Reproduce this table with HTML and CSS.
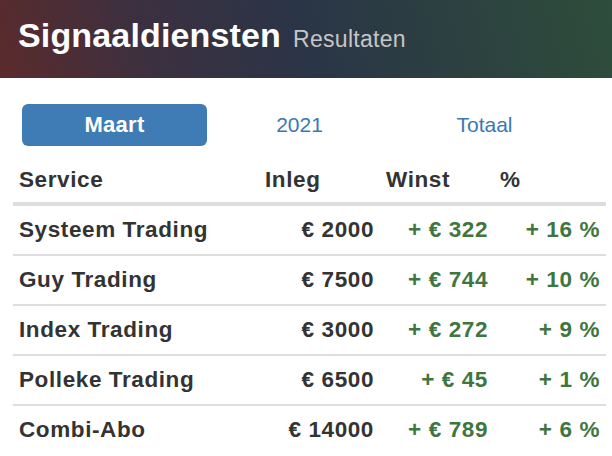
FILE: index.html
```html
<!DOCTYPE html>
<html lang="nl">
<head>
<meta charset="utf-8">
<title>Signaaldiensten Resultaten</title>
<link rel="stylesheet" href="styles.css">
</head>
<body>
<header class="topbar">
  <h1 class="title">Signaaldiensten</h1>
  <span class="subtitle">Resultaten</span>
</header>
<nav class="tabs">
  <a class="tab active">Maart</a>
  <a class="tab">2021</a>
  <a class="tab">Totaal</a>
</nav>
<table class="results">
  <colgroup>
    <col class="c-service">
    <col class="c-inleg">
    <col class="c-winst">
    <col class="c-pct">
  </colgroup>
  <thead>
    <tr><th>Service</th><th>Inleg</th><th>Winst</th><th>%</th></tr>
  </thead>
  <tbody>
    <tr><td>Systeem Trading</td><td class="num">€ 2000</td><td class="num pos">+ € 322</td><td class="num pos">+ 16 %</td></tr>
    <tr><td>Guy Trading</td><td class="num">€ 7500</td><td class="num pos">+ € 744</td><td class="num pos">+ 10 %</td></tr>
    <tr><td>Index Trading</td><td class="num">€ 3000</td><td class="num pos">+ € 272</td><td class="num pos">+ 9 %</td></tr>
    <tr><td>Polleke Trading</td><td class="num">€ 6500</td><td class="num pos">+ € 45</td><td class="num pos">+ 1 %</td></tr>
    <tr><td>Combi-Abo</td><td class="num">€ 14000</td><td class="num pos">+ € 789</td><td class="num pos">+ 6 %</td></tr>
  </tbody>
</table>
</body>
</html>
```
FILE: styles.css
```css
* { box-sizing: border-box; }
html, body {
  margin: 0;
  padding: 0;
  background: #fff;
  font-family: "Liberation Sans", Arial, Helvetica, sans-serif;
  color: #333;
}
.topbar {
  height: 78px;
  display: flex;
  align-items: baseline;
  gap: 12px;
  padding: 15px 18px 0;
  background: linear-gradient(75deg, #5b2b2c 0%, #3b3040 25%, #2a3547 50%, #2c4140 75%, #2e4d3b 100%);
}
.title {
  margin: 0;
  font-size: 34px;
  line-height: 40px;
  font-weight: bold;
  color: #fff;
  letter-spacing: 0.15px;
}
.subtitle {
  font-size: 23px;
  color: #c6c6c6;
  letter-spacing: 0.3px;
}
.tabs {
  display: grid;
  grid-template-columns: repeat(3, 185px);
  margin: 26px 0 0 22px;
}
.tab {
  height: 42px;
  line-height: 42px;
  text-align: center;
  font-size: 21px;
  color: #3a78b4;
  border-radius: 6px;
}
.tab.active {
  background: #3f7bb5;
  color: #fff;
  font-weight: bold;
  font-size: 22px;
  letter-spacing: 0.3px;
}
.results {
  margin: 10px 0 0 13px;
  width: 593px;
  border-collapse: collapse;
  table-layout: fixed;
  font-size: 22.5px;
  font-weight: bold;
  letter-spacing: 0.6px;
}
.c-service { width: 246px; }
.c-inleg { width: 121px; }
.c-winst { width: 114px; }
.c-pct { width: 112px; }
.results th {
  text-align: left;
  padding: 9px 6px 7px;
  line-height: 30px;
  border-bottom: 4px solid #dddddd;
}
.results td {
  padding: 9px 6px 9px;
  line-height: 30px;
  border-top: 2px solid #dddddd;
  white-space: nowrap;
}
.results tbody tr:first-child td { border-top: 0; }
.results .num { text-align: right; }
.results .pos { color: #3f7640; }
```
